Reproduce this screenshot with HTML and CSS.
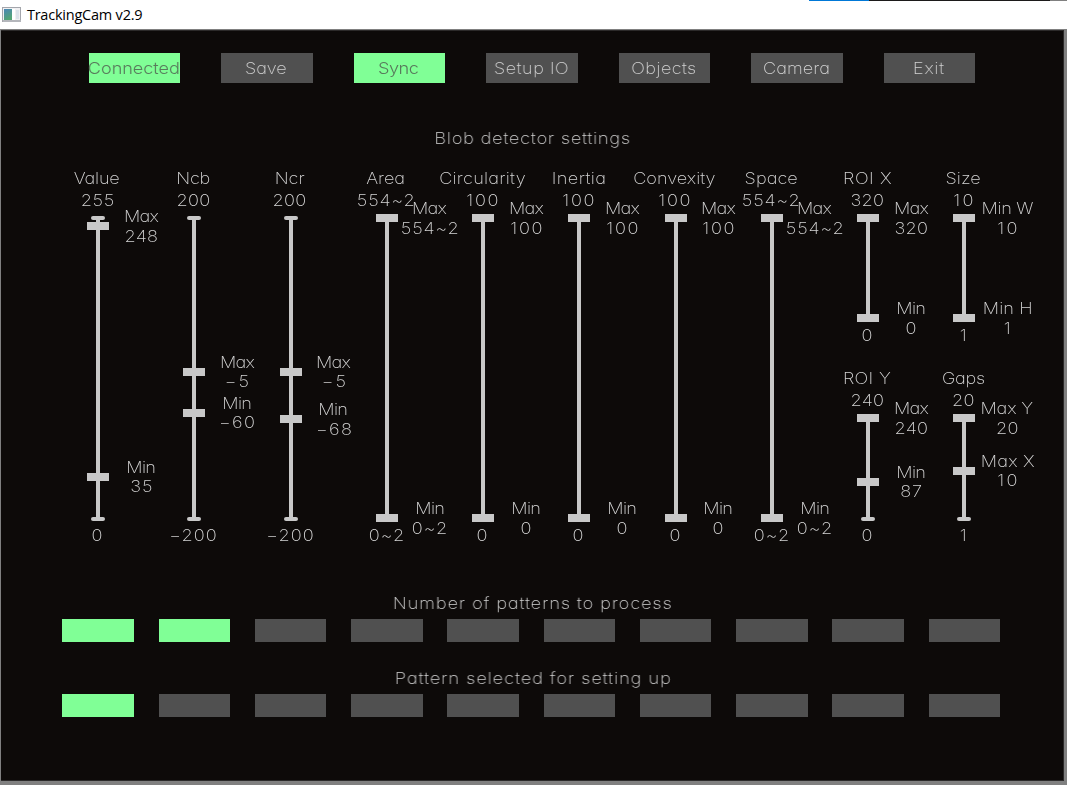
FILE: index.html
```html
<!DOCTYPE html>
<html lang="en">
<head>
<meta charset="utf-8">
<title>TrackingCam v2.9</title>
<link rel="stylesheet" href="styles.css">
</head>
<body>
<div class="top-strip"><span class="strip-blue"></span><span class="strip-dark"></span><span class="strip-gray"></span></div>
<header class="titlebar">
  <svg class="app-icon" width="20" height="16" viewBox="0 0 20 16">
    <defs><linearGradient id="g" x1="0" y1="0" x2="0.4" y2="1"><stop offset="0" stop-color="#4a86b8"/><stop offset="1" stop-color="#53a574"/></linearGradient></defs>
    <rect x="0.5" y="0.5" width="18" height="14" fill="#f0f0f2" stroke="#a4a6ac"/>
    <rect x="1" y="13" width="18" height="2" fill="#b4b6bb"/>
    <rect x="2" y="2" width="8" height="11" fill="url(#g)"/>
    <rect x="10" y="2" width="3" height="11" fill="#fff"/>
    <rect x="14" y="3" width="3" height="9" fill="#dce3ea"/>
  </svg>
  <span class="title">TrackingCam v2.9</span>
</header>
<main class="window">
  <nav class="toolbar">
    <button class="btn on"><span class="t">Connected</span></button>
    <button class="btn"><span class="t">Save</span></button>
    <button class="btn on"><span class="t">Sync</span></button>
    <button class="btn"><span class="t">Setup IO</span></button>
    <button class="btn"><span class="t">Objects</span></button>
    <button class="btn"><span class="t">Camera</span></button>
    <button class="btn"><span class="t">Exit</span></button>
  </nav>
  <h1 class="heading"><span class="t">Blob detector settings</span></h1>
  <section class="sliders" id="sliders"></section>
  <h2 class="heading"><span class="t">Number of patterns to process</span></h2>
  <div class="cells"><i class="cell on"></i><i class="cell on"></i><i class="cell"></i><i class="cell"></i><i class="cell"></i><i class="cell"></i><i class="cell"></i><i class="cell"></i><i class="cell"></i><i class="cell"></i></div>
  <h2 class="heading second"><span class="t">Pattern selected for setting up</span></h2>
  <div class="cells"><i class="cell on"></i><i class="cell"></i><i class="cell"></i><i class="cell"></i><i class="cell"></i><i class="cell"></i><i class="cell"></i><i class="cell"></i><i class="cell"></i><i class="cell"></i></div>
</main>
<script src="app.js"></script>
</body>
</html>
```

FILE: styles.css
```css
* { box-sizing: border-box; }
body {
  margin: 0; width: 1067px; height: 785px; overflow: hidden;
  display: flex; flex-direction: column; background: #808080;
  font-family: Inter, "DejaVu Sans", sans-serif;
}
.top-strip { display: flex; height: 1px; flex: none; background: #fff; padding-left: 809px; }
.strip-blue { width: 60px; background: #0078d7; }
.strip-dark { width: 181px; background: #1c1a1a; }
.strip-gray { flex: 1; background: #808080; }
.titlebar { flex: none; height: 28px; background: #fff; display: flex; align-items: center; gap: 5px; padding-left: 2px; }
.app-icon { display: block; }
.title { font: 14.5px/20px "Open Sans", "Noto Sans", sans-serif; color: #000; white-space: pre; }
.window {
  margin: 1px 3px 0 1px; height: 751px; flex: none; background: #0d0a09;
  border: 1px solid #2c2a2a; border-width: 1px 1px 1px 0; padding: 22px 0 0;
}
.t {
  display: inline-block; font-size: 16.5px; line-height: 20px; font-weight: 200;
  font-feature-settings: "cv11" 1; color: #d4d4d4; white-space: pre;
  transform: scaleX(1.1); will-change: transform;
}
.toolbar { display: flex; gap: 41px; padding-left: 87.5px; }
.btn { width: 91.5px; height: 30px; padding: 0 1px 0 0; border: 0; background: #505050; font: inherit; display: flex; justify-content: center; align-items: center; flex: none; }
.on { background: #80ff96; }
.btn.on .t { color: #587a5c; font-weight: 300; }
.heading { margin: 0; height: 20px; display: flex; justify-content: center; font-weight: 200; padding-left: 1px; }
h1.heading { margin-top: 45px; }
.sliders { display: grid; grid-template-columns: repeat(10, 96.25px); padding-left: 48.9px; margin-top: 20px; height: 400px; }
.col { display: flex; flex-direction: column; }
.slider { display: flex; flex-direction: column; align-items: center; height: 378px; }
.slider.short { height: 200px; }
.name, .hi, .lo { height: 20px; display: flex; justify-content: center; padding-right: 1.5px; }
.hi { margin-top: 2px; }
.lo { margin-top: -0.6px; }
.track { position: relative; width: 4px; height: 300px; flex: none; margin: 8px 0; background: #c8c8c8; }
.short .track { height: 100px; }
.track::before, .track::after { content: ""; position: absolute; left: -5px; width: 14px; height: 4px; border-radius: 2px; background: #c8c8c8; }
.track::before { top: -2px; }
.track::after { bottom: -3px; }
.knob { position: absolute; left: -9px; width: 22px; height: 8px; margin-top: -4px; background: #c8c8c8; }
.side { position: absolute; left: 5px; width: 80px; margin-top: -20px; display: flex; flex-direction: column; align-items: center; }
.side .t { height: 19.5px; }
.cells { display: flex; gap: 24.75px; padding-left: 61.3px; }
h2.heading { margin-top: 25px; }
.cell { width: 71.5px; height: 23px; background: #505050; margin-top: 6px; flex: none; }
.cell.on { background: #80ff96; }
h2.second { margin-top: 26px; }
```

FILE: app.js
```js
const columns = [
  [["Value", "255", "0", [["Max", "248", 8.2], ["Min", "35", 258.8]]]],
  [["Ncb", "200", "-200", [["Max", "-5", 153.5], ["Min", "-60", 194.8]]]],
  [["Ncr", "200", "-200", [["Max", "-5", 153.5], ["Min", "-68", 201]]]],
  [["Area", "554~2", "0~2", [["Max", "554~2", 0], ["Min", "0~2", 300]]]],
  [["Circularity", "100", "0", [["Max", "100", 0], ["Min", "0", 300]]]],
  [["Inertia", "100", "0", [["Max", "100", 0], ["Min", "0", 300]]]],
  [["Convexity", "100", "0", [["Max", "100", 0], ["Min", "0", 300]]]],
  [["Space", "554~2", "0~2", [["Max", "554~2", 0], ["Min", "0~2", 300]]]],
  [["ROI X", "320", "0", [["Max", "320", 0], ["Min", "0", 100]]],
   ["ROI Y", "240", "0", [["Max", "240", 0], ["Min", "87", 63.5]]]],
  [["Size", "10", "1", [["Min W", "10", 0], ["Min H", "1", 100]]],
   ["Gaps", "20", "1", [["Max Y", "20", 0], ["Max X", "10", 52.5]]]],
];
const text = s => `<span class="t">${s.replace("-", "\u2212")}</span>`;
document.getElementById("sliders").innerHTML = columns.map(col =>
  `<div class="col">${col.map(([name, hi, lo, knobs]) =>
    `<div class="slider${col.length > 1 ? " short" : ""}">
      <div class="name">${text(name)}</div><div class="hi">${text(hi)}</div>
      <div class="track">${knobs.map(([k, v, y]) =>
        `<i class="knob" style="top:${y}px"></i><div class="side" style="top:${y}px">${text(k)}${text(v)}</div>`).join("")}</div>
      <div class="lo">${text(lo)}</div></div>`).join("")}</div>`).join("");

// Advance widths of a plotter-style simplex face, in font units.
const adv = {};
[18,21,21,21,19,18,21,22,8,16,21,17,24,22,22,21,22,21,20,16,21,18,24,20,18,20]
  .forEach((w, i) => adv[String.fromCharCode(65 + i)] = w);
[19,19,18,19,18,12,19,19,8,10,17,8,30,19,19,19,19,13,17,12,19,16,22,17,16,17]
  .forEach((w, i) => adv[String.fromCharCode(97 + i)] = w);
for (const d of "0123456789") adv[d] = 20;
adv[" "] = 16; adv["\u2212"] = 26; adv["~"] = 24;

// Spread the glyphs so that the text occupies the target width.
function fit(el, target) {
  const extra = (target - el.offsetWidth) / el.textContent.length;
  el.style.letterSpacing = extra + "px";
  el.style.textIndent = extra / 2 + "px";
  el.style.marginRight = -extra / 2 + "px";
}
document.querySelectorAll(".t").forEach(el =>
  fit(el, [...el.textContent].reduce((s, c) => s + adv[c], 0) * 0.5625 / 1.1));
fit(document.querySelector(".title"), 115.5);
```
